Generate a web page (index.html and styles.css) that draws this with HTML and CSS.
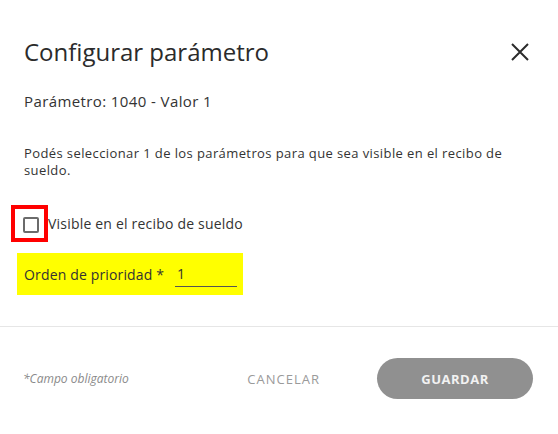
FILE: index.html
```html
<!DOCTYPE html>
<html lang="es">
<head>
<meta charset="utf-8">
<title>Configurar parámetro</title>
<link rel="stylesheet" href="styles.css">
</head>
<body>
<div class="dialog">
  <div class="content">
    <div class="header">
      <h1 class="title">Configurar parámetro</h1>
      <button class="close" aria-label="Cerrar">
        <svg width="18" height="18" viewBox="0 0 18 18"><path d="M1 1 L17 17 M17 1 L1 17" stroke="#2b2b2b" stroke-width="2" fill="none"/></svg>
      </button>
    </div>
    <p class="param">Parámetro: 1040 - Valor 1</p>
    <p class="desc">Podés seleccionar 1 de los parámetros para que sea visible en el recibo de sueldo.</p>
    <div class="check-row">
      <span class="highlight-box"><span class="checkbox"></span></span>
      <span class="check-label">Visible en el recibo de sueldo</span>
    </div>
    <div class="priority">
      <span class="priority-label">Orden de prioridad *</span>
      <span class="priority-input">1</span>
    </div>
  </div>
  <div class="divider"></div>
  <div class="footer">
    <span class="required">*Campo obligatorio</span>
    <div class="actions">
      <button class="btn-cancel">CANCELAR</button>
      <button class="btn-save">GUARDAR</button>
    </div>
  </div>
</div>
</body>
</html>
```
FILE: styles.css
```css
html, body {
  margin: 0;
  padding: 0;
  background: #ffffff;
}
body {
  font-family: "Open Sans", "Noto Sans", sans-serif;
  color: #333333;
}
.dialog {
  width: 558px;
  height: 434px;
}
.content {
  padding: 37px 24px 0 24px;
}
.header {
  display: flex;
  justify-content: space-between;
  align-items: center;
}
.title {
  margin: 0;
  font-size: 24px;
  font-weight: 400;
  line-height: 30px;
  color: #2b2b2b;
}
.close {
  border: 0;
  background: none;
  padding: 0;
  margin: 0 5px 0 0;
  width: 18px;
  height: 18px;
  display: flex;
}
.param {
  margin: 24px 0 0 0;
  font-size: 15px;
  letter-spacing: 0.4px;
  line-height: 20px;
  color: #333;
}
.desc {
  margin: 34px 0 0 0;
  font-size: 13px;
  letter-spacing: 0.4px;
  line-height: 17px;
  color: #333;
  padding-right: 20px;
}
.check-row {
  margin-top: 26px;
  display: flex;
  align-items: center;
  margin-left: -13px;
}
.highlight-box {
  display: block;
  border: 4px solid #ff0000;
  padding: 8px 5px 5px 8px;
  box-sizing: content-box;
  width: 16px;
  height: 16px;
}
.checkbox {
  display: block;
  width: 16px;
  height: 16px;
  box-sizing: border-box;
  border: 2px solid #6b6b6b;
  border-radius: 2px;
}
.check-label {
  font-size: 14px;
  letter-spacing: 0.2px;
  line-height: 20px;
  color: #333;
}
.priority {
  margin-top: 11px;
  margin-left: -7px;
  width: 226px;
  height: 42px;
  box-sizing: border-box;
  padding: 0 5px 0 7px;
  background: #ffff00;
  display: flex;
  align-items: center;
}
.priority-label {
  font-size: 14px;
  letter-spacing: 0.15px;
  white-space: nowrap;
  flex-shrink: 0;
  color: #333;
}
.priority-input {
  margin-left: 11px;
  width: 62px;
  flex-shrink: 0;
  box-sizing: border-box;
  padding: 0 0 2px 2px;
  border-bottom: 1px solid #555;
  font-size: 14px;
  line-height: 20px;
  color: #333;
  margin-top: 2px;
}
.divider {
  margin-top: 31px;
  height: 1px;
  background: #e6e6e6;
}
.footer {
  display: flex;
  align-items: center;
  padding: 31px 25px 0 23px;
}
.required {
  font-size: 12px;
  font-style: italic;
  color: #8a8a8a;
}
.actions {
  margin-left: auto;
  display: flex;
  align-items: center;
  gap: 57px;
}
.btn-cancel {
  border: 0;
  background: none;
  padding: 0;
  font-family: "Open Sans", sans-serif;
  font-size: 13px;
  letter-spacing: 1px;
  color: #9a9a9a;
}
.btn-save {
  width: 156px;
  height: 41px;
  border: 0;
  border-radius: 21px;
  background: #909090;
  color: #f2f2f2;
  font-family: "Open Sans", sans-serif;
  font-weight: 700;
  font-size: 13px;
  letter-spacing: 0.5px;
}
```
